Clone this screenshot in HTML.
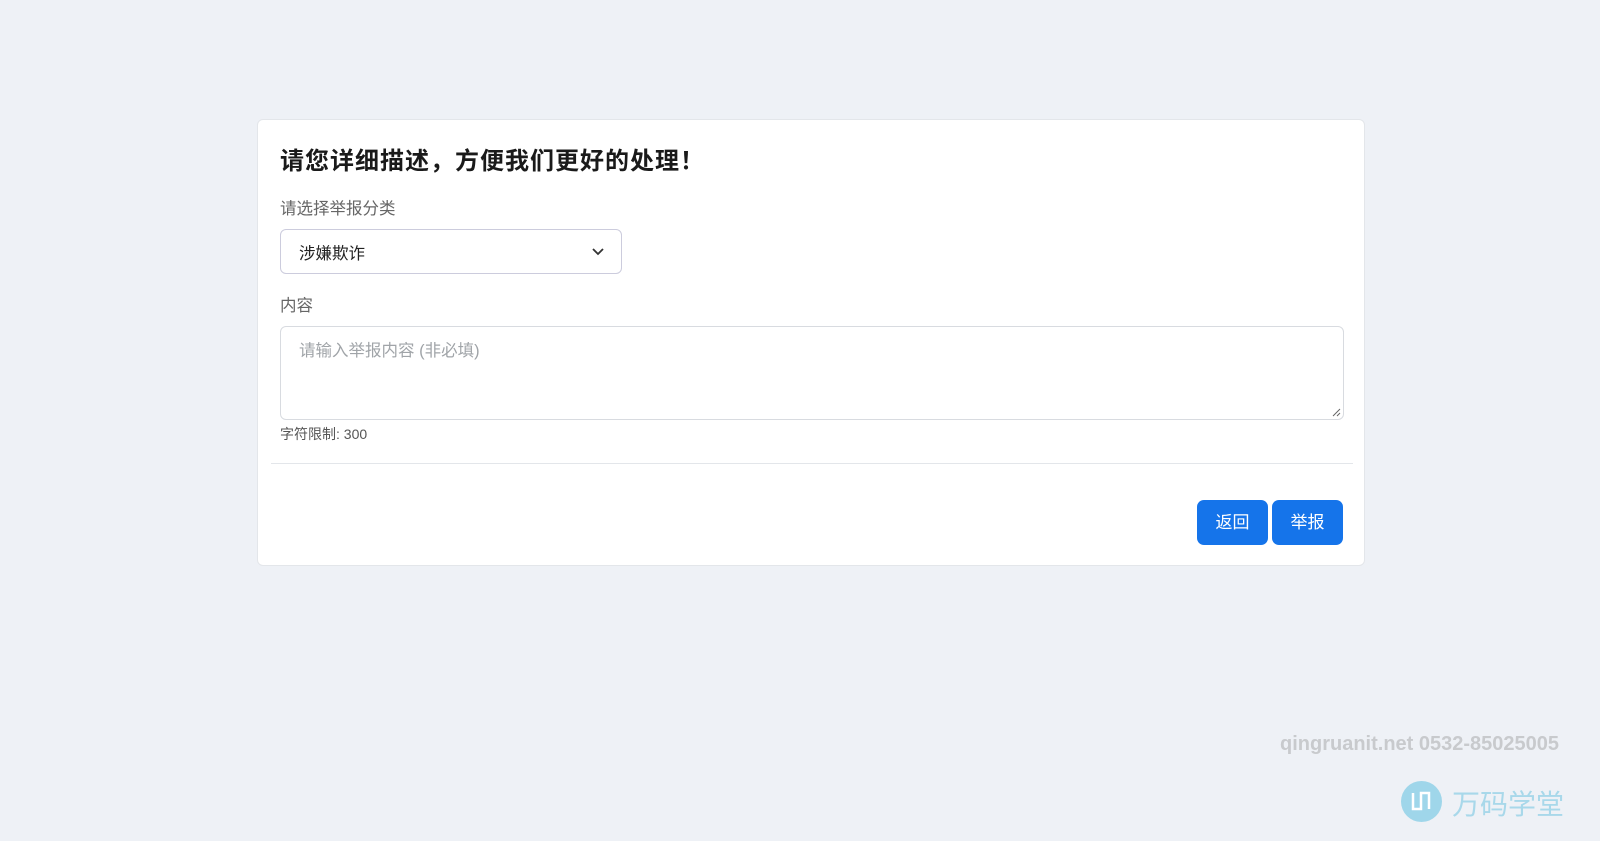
<!DOCTYPE html>
<html><head><meta charset="utf-8"><style>
*{box-sizing:border-box;margin:0;padding:0}
body{width:1600px;height:841px;background:#eef1f6;font-family:"Liberation Sans","Noto Sans CJK SC",sans-serif;position:relative;overflow:hidden}
.card{position:absolute;left:257px;top:119px;width:1108px;height:447px;background:#fff;border:1px solid #e3e6ea;border-radius:6px}
.abs{position:absolute}
h1{position:absolute;left:22px;top:21px;font-size:24px;letter-spacing:1px;font-weight:bold;color:#1a1a1a;white-space:nowrap}
.lbl{font-size:16.5px;color:#666}
.sel{left:22px;top:109px;width:342px;height:45px;border:1px solid #ccd;border-radius:6px;font-size:16.5px;color:#222;padding:10px 18px}
.ta{left:22px;top:206px;width:1064px;height:94px;border:1px solid #d8dbe0;border-radius:6px;font-size:16.5px;color:#a0a4a8;padding:10px 18px}
.btn{top:380px;width:71px;height:45px;background:#1574ea;border-radius:7px;color:#fff;font-size:17px;text-align:center;line-height:45px}
</style></head><body>
<div class="card">
<h1>请您详细描述，方便我们更好的处理！</h1>
<div class="abs lbl" style="left:22px;top:75px">请选择举报分类</div>
<div class="abs sel">涉嫌欺诈
<svg class="abs" style="right:16px;top:17px" width="14" height="10" viewBox="0 0 14 10"><path d="M2 2l5 5 5-5" stroke="#333" stroke-width="1.8" fill="none"/></svg></div>
<div class="abs lbl" style="left:22px;top:172px">内容</div>
<div class="abs ta">请输入举报内容 (非必填)
<svg class="abs" style="right:2px;bottom:2px" width="10" height="10"><path d="M9 2L2 9M9 6L6 9" stroke="#666" stroke-width="1"/></svg></div>
<div class="abs" style="left:22px;top:304px;font-size:14px;color:#555">字符限制: 300</div>
<div class="abs" style="left:13px;top:343px;width:1082px;height:1px;background:#e3e6ea"></div>
<div class="abs btn" style="left:939px">返回</div>
<div class="abs btn" style="left:1014px">举报</div>
</div>
<div class="abs" style="left:1280px;top:733px;font-size:20px;font-weight:bold;color:#c8cacd;white-space:nowrap">qingruanit.net 0532-85025005</div>
<div class="abs" style="left:1401px;top:781px;width:41px;height:41px;border-radius:50%;background:#9fd6ea"></div>
<svg class="abs" style="left:1401px;top:781px" width="41" height="41"><path d="M12 12v16h8V12M20 28V12h8v16" stroke="#fff" stroke-width="2.5" fill="none"/></svg>
<div class="abs" style="left:1452px;top:783px;font-size:28px;color:#a8d8ea;white-space:nowrap">万码学堂</div>
</body></html>
